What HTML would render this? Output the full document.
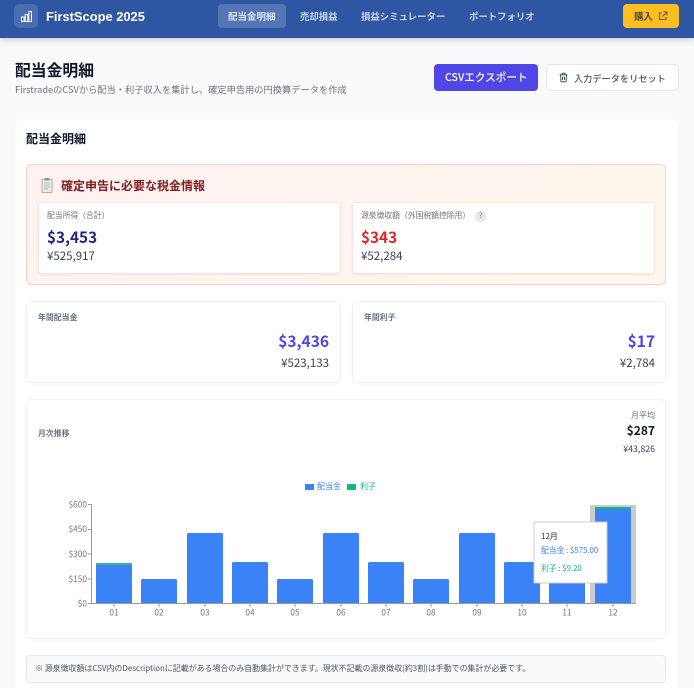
<!DOCTYPE html>
<html lang="ja"><head><meta charset="utf-8"><title>FirstScope 2025</title>
<style>
*{box-sizing:border-box;margin:0;padding:0}
html,body{width:694px;height:688px;overflow:hidden}
body{background:#f9fafb;font-family:"Noto Sans CJK JP","Liberation Sans",sans-serif;position:relative}
.t{position:absolute;line-height:20px;height:20px;white-space:nowrap}
.r{text-align:right}
.b{position:absolute}
.white{background:#fff;border-radius:5px}
</style></head><body>
<div class="b" style="left:0;top:0;width:694px;height:38px;background:#2f56a3;box-shadow:0 2px 6px rgba(0,0,0,.18)"></div>
<div class="b" style="left:14px;top:4px;width:24px;height:24px;border-radius:5px;background:#4a6cb0"></div>
<svg class="b" style="left:20px;top:9px" width="13" height="14" viewBox="0 0 13 14" fill="none" stroke="#fff" stroke-width="1"><path d="M1.500 8h2.600v4.500H1.500zM5.200 5.500h2.600v7H5.200zM8.900 2.500h2.600v10H8.900z"/></svg>
<div class="t" style="left:46px;top:7px;font-family:'Liberation Sans',sans-serif;font-size:12.900px;font-weight:700;color:#fff">FirstScope 2025</div>
<div class="b" style="left:218px;top:4px;width:68px;height:24px;border-radius:4px;background:#5475b3"></div>
<div class="t" style="left:228px;top:6px;font-size:9.500px;font-weight:700;color:#dbe4f3">配当金明細</div>
<div class="t" style="left:300px;top:6px;font-size:9.400px;font-weight:700;color:#c7d4ea">売却損益</div>
<div class="t" style="left:361px;top:6px;font-size:9.400px;font-weight:700;color:#c7d4ea">損益シミュレーター</div>
<div class="t" style="left:469px;top:6px;font-size:9.400px;font-weight:700;color:#c7d4ea">ポートフォリオ</div>
<div class="b" style="left:623px;top:4px;width:56px;height:24px;border-radius:4px;background:#fbbf24"></div>
<div class="t" style="left:634px;top:6px;font-size:9.400px;font-weight:700;color:#5b4a3a">購入</div>
<svg class="b" style="left:658px;top:11px" width="10" height="10" viewBox="0 0 10 10" fill="none" stroke="#6b5a44" stroke-width="1"><path d="M4 2H1.500v6.500H8V6M5.500 1H9v3.500M9 1L4.500 5.500"/></svg>

<div class="t" style="left:15px;top:60px;font-size:15.800px;font-weight:700;color:#111827">配当金明細</div>
<div class="t" style="left:15px;top:79px;font-size:9.240px;color:#6b7280">FirstradeのCSVから配当・利子収入を集計し、確定申告用の円換算データを作成</div>
<div class="b" style="left:434px;top:64px;width:104px;height:27px;border-radius:4px;background:#4f46e5"></div>
<div class="t" style="left:445px;top:68px;font-size:10.600px;font-weight:500;color:#fff">CSVエクスポート</div>
<div class="b white" style="left:546px;top:64px;width:133px;height:27px;border:1px solid #e2e6ee;border-radius:5px"></div>
<svg class="b" style="left:558px;top:72px" width="11" height="11" viewBox="0 0 11 11" fill="none" stroke="#4b5563" stroke-width="1"><path d="M1.500 2.800h8M4 2.800V1.300h3v1.500M2.500 2.800l.5 7h5l.5-7M4.500 4.500v3.500M6.500 4.500v3.500"/></svg>
<div class="t" style="left:574px;top:68px;font-size:9.200px;font-weight:500;color:#4b5563">入力データをリセット</div>

<div class="b white" style="left:15px;top:119px;width:663px;height:580px;border-radius:7px;box-shadow:0 1px 3px rgba(0,0,0,.05)"></div>
<div class="t" style="left:26px;top:129px;font-size:12px;font-weight:700;color:#111827">配当金明細</div>

<div class="b" style="left:26px;top:164px;width:640px;height:121px;border:1px solid #fecaca;border-radius:5px;background:linear-gradient(135deg,#fef2f2,#fff7ed)"></div>
<svg class="b" style="left:41px;top:178px" width="12" height="15" viewBox="0 0 12 15"><rect x=".5" y="1" width="11" height="14" rx="1" fill="#d9a46a"/><rect x="1.500" y="2" width="9" height="12" fill="#e7edf3"/><rect x="3.500" y="0" width="5" height="2.500" rx=".5" fill="#8a94a0"/><path d="M3 5h6M3 7h6M3 9h6M3 11h4" stroke="#a3adb8" stroke-width=".8"/></svg>
<div class="t" style="left:61px;top:176px;font-size:12px;font-weight:700;color:#7f1d1d">確定申告に必要な税金情報</div>

<div class="b white" style="left:38px;top:202px;width:303px;height:72px;border:1px solid #fee2e2;border-radius:3px;box-shadow:0 1px 2px rgba(0,0,0,.06)"></div>
<div class="t" style="left:47px;top:206px;font-size:7.800px;color:#6b7280">配当所得（合計）</div>
<div class="t" style="left:47px;top:227px;font-size:15.300px;font-weight:700;color:#1e2a78">$3,453</div>
<div class="t" style="left:47px;top:246px;font-size:11.500px;color:#374151">¥525,917</div>

<div class="b white" style="left:352px;top:202px;width:303px;height:72px;border:1px solid #fee2e2;border-radius:3px;box-shadow:0 1px 2px rgba(0,0,0,.06)"></div>
<div class="t" style="left:361px;top:206px;font-size:7.800px;color:#6b7280">源泉徴収額（外国税額控除用）</div>
<div class="b" style="left:475px;top:211px;width:11px;height:11px;border-radius:50%;background:#e5e7eb"></div>
<div class="t" style="left:475px;top:206px;width:11px;text-align:center;font-size:7px;color:#6b7280">?</div>
<div class="t" style="left:361px;top:227px;font-size:15.300px;font-weight:700;color:#dc2626">$343</div>
<div class="t" style="left:361px;top:246px;font-size:11.500px;color:#374151">¥52,284</div>

<div class="b white" style="left:26px;top:301px;width:315px;height:82px;border:1px solid #f0f1f6;box-shadow:0 1px 2px rgba(0,0,0,.03)"></div>
<div class="t" style="left:38px;top:308px;font-size:7.900px;font-weight:700;color:#6b7280">年間配当金</div>
<div class="t r" style="right:365px;top:331px;font-size:15.500px;font-weight:700;color:#4f46e5">$3,436</div>
<div class="t r" style="right:365px;top:353px;font-size:11.500px;color:#374151">¥523,133</div>

<div class="b white" style="left:352px;top:301px;width:314px;height:82px;border:1px solid #f0f1f6;box-shadow:0 1px 2px rgba(0,0,0,.03)"></div>
<div class="t" style="left:364px;top:308px;font-size:7.900px;font-weight:700;color:#6b7280">年間利子</div>
<div class="t r" style="right:39px;top:331px;font-size:15.500px;font-weight:700;color:#4f46e5">$17</div>
<div class="t r" style="right:39px;top:353px;font-size:11.500px;color:#374151">¥2,784</div>

<div class="b white" style="left:26px;top:399px;width:640px;height:240px;border:1px solid #f0f1f6;box-shadow:0 1px 2px rgba(0,0,0,.03)"></div>
<div class="t" style="left:38px;top:424px;font-size:7.900px;font-weight:700;color:#6b7280">月次推移</div>
<div class="t r" style="right:39px;top:406px;font-size:8px;color:#6b7280">月平均</div>
<div class="t r" style="right:39px;top:421px;font-size:12px;font-weight:700;color:#111827">$287</div>
<div class="t r" style="right:39px;top:439px;font-size:8.800px;color:#374151">¥43,826</div>

<svg class="b" style="left:0;top:475px" width="694" height="150" viewBox="0 475 694 150">
<rect x="305" y="484" width="9" height="6" fill="#3b82f6"/>
<text x="317" y="489" font-size="8" fill="#3b82f6">配当金</text>
<rect x="347" y="484" width="9" height="6" fill="#10b981"/>
<text x="360" y="489" font-size="8" fill="#10b981">利子</text>
<rect x="590" y="505" width="46" height="99" fill="#ccc"/>
<g fill="#3b82f6">
<rect x="96" y="565" width="36" height="39"/>
<rect x="141" y="579" width="36" height="25" rx="1.500"/>
<rect x="187" y="533" width="36" height="71" rx="1.500"/>
<rect x="232" y="562" width="36" height="42" rx="1.500"/>
<rect x="277" y="579" width="36" height="25" rx="1.500"/>
<rect x="323" y="533" width="36" height="71" rx="1.500"/>
<rect x="368" y="562" width="36" height="42" rx="1.500"/>
<rect x="413" y="579" width="36" height="25" rx="1.500"/>
<rect x="459" y="533" width="36" height="71" rx="1.500"/>
<rect x="504" y="562" width="36" height="42" rx="1.500"/>
<rect x="549" y="562" width="36" height="42" rx="1.500"/>
<rect x="595" y="509" width="36" height="95"/>
</g>
<rect x="96" y="563" width="36" height="2" fill="#34b58c"/>
<rect x="595" y="507" width="36" height="2" fill="#10b981"/>
<g stroke="#999" stroke-width="1" fill="none">
<path d="M91.500 504.500V603.500H636M88 504.500h3.500M88 529.500h3.500M88 554h3.500M88 579h3.500M88 603.500h3.500"/>
<path d="M114 604v3M159 604v3M205 604v3M250 604v3M295 604v3M341 604v3M386 604v3M431 604v3M477 604v3M522 604v3M567 604v3M613 604v3"/>
</g>
<g font-size="8.300" fill="#777" text-anchor="end">
<text x="87" y="507.500">$600</text><text x="87" y="532">$450</text><text x="87" y="557">$300</text><text x="87" y="582">$150</text><text x="87" y="606.500">$0</text>
</g>
<g font-size="8.300" fill="#777" text-anchor="middle">
<text x="114" y="615.500">01</text><text x="159" y="615.500">02</text><text x="205" y="615.500">03</text><text x="250" y="615.500">04</text><text x="295" y="615.500">05</text><text x="341" y="615.500">06</text><text x="386" y="615.500">07</text><text x="431" y="615.500">08</text><text x="477" y="615.500">09</text><text x="522" y="615.500">10</text><text x="567" y="615.500">11</text><text x="613" y="615.500">12</text>
</g>
<rect x="534" y="522" width="73" height="61" fill="#fff" stroke="#ccc"/>
<text x="541" y="539" font-size="8" fill="#333">12月</text>
<text x="541" y="553" font-size="7.800" fill="#3b82f6">配当金 : $575.00</text>
<text x="541" y="571" font-size="7.800" fill="#10b981">利子 : $9.20</text>
</svg>

<div class="b" style="left:26px;top:655px;width:640px;height:28px;border:1px solid #e5e7eb;border-radius:4px;background:#f9fafb"></div>
<div class="t" style="left:35px;top:659px;font-size:7.950px;color:#4b5563">※ 源泉徴収額はCSV内のDescriptionに記載がある場合のみ自動集計ができます。現状不記載の源泉徴収(約3割)は手動での集計が必要です。</div>
</body></html>
